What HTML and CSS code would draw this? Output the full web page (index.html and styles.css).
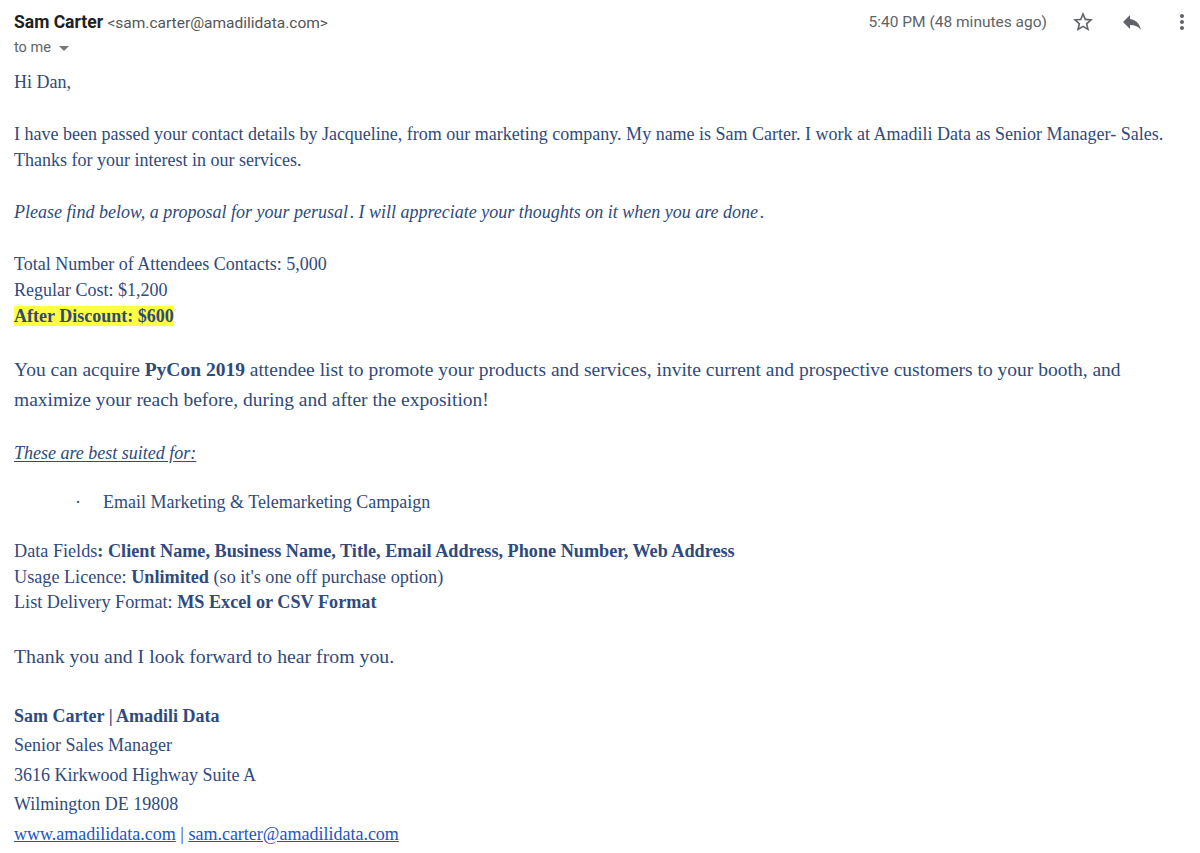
FILE: index.html
```html
<!DOCTYPE html>
<html>
<head>
<meta charset="utf-8">
<link rel="stylesheet" href="styles.css">
</head>
<body>
<div class="mail">
  <header class="head">
    <div class="from">
      <div class="sender"><span class="name">Sam Carter</span> <span class="addr">&lt;sam.carter@amadilidata.com&gt;</span></div>
      <div class="to">to me <svg class="caret" width="10" height="5" viewBox="0 0 10 5"><path d="M0 0h10L5 5z" fill="#777"/></svg></div>
    </div>
    <div class="meta">
      <span class="time">5:40 PM (48 minutes ago)</span>
      <svg class="ico star" width="24" height="24" viewBox="0 0 24 24"><path fill="#5f6368" d="M22 9.24l-7.19-.62L12 2 9.19 8.63 2 9.24l5.46 4.73L5.82 21 12 17.27 18.18 21l-1.63-7.030L22 9.24zM12 15.4l-3.76 2.27 1-4.28-3.32-2.88 4.38-.38L12 6.1l1.71 4.04 4.38.38-3.32 2.88 1 4.28L12 15.4z"/></svg>
      <svg class="ico reply" width="24" height="24" viewBox="0 0 24 24"><path fill="#5f6368" d="M10 9V5l-7 7 7 7v-4.1c5 0 8.5 1.6 11 5.1-1-5-4-10-11-11z"/></svg>
      <svg class="ico more" width="24" height="24" viewBox="0 0 24 24"><path fill="#5f6368" d="M12 8c1.1 0 2-.9 2-2s-.9-2-2-2-2 .9-2 2 .9 2 2 2zm0 2c-1.1 0-2 .9-2 2s.9 2 2 2 2-.9 2-2-.9-2-2-2zm0 6c-1.1 0-2 .9-2 2s.9 2 2 2 2-.9 2-2-.9-2-2-2z"/></svg>
    </div>
  </header>

  <div class="body">
    <p class="p greet">Hi Dan,</p>
    <p class="p">I have been passed your contact details by Jacqueline, from our marketing company. My name is Sam Carter. I work at Amadili Data as Senior Manager- Sales. Thanks for your interest in our services.</p>
    <p class="p ital">Please find below, a proposal for your perusal<span class="sp">.</span>I will appreciate your thoughts on it when you are done<span class="sp">.</span></p>
    <p class="p">Total Number of Attendees Contacts: 5,000<br>Regular Cost: $1,200<br><b class="hl">After Discount: $600</b></p>
    <p class="p big">You can acquire <b>PyCon 2019</b> attendee list to promote your products and services, invite current and prospective customers to your booth, and maximize your reach before, during and after the exposition!</p>
    <p class="p ital under">These are best suited for:</p>
    <div class="bullet"><span class="dot">·</span><span>Email Marketing &amp; Telemarketing Campaign</span></div>
    <p class="p narrow">Data Fields<b>: Client Name, Business Name, Title, Email Address, Phone Number, Web Address</b><br>Usage Licence: <b>Unlimited</b> (so it's one off purchase option)<br>List Delivery Format: <b>MS Excel or CSV Format</b></p>
    <p class="p big thanks">Thank you and I look forward to hear from you.</p>
    <div class="sig">
      <b>Sam Carter | Amadili Data</b>
      <span>Senior Sales Manager</span>
      <span>3616 Kirkwood Highway Suite A</span>
      <span>Wilmington DE 19808</span>
      <span><a href="#">www.amadilidata.com</a> | <a href="#">sam.carter@amadilidata.com</a></span>
    </div>
  </div>
</div>
</body>
</html>
```

FILE: styles.css
```css
html, body { margin: 0; padding: 0; background: #fff; }
.mail { padding: 0 0 0 14px; }
.head { display: flex; justify-content: space-between; align-items: flex-start; font-family: Roboto, "Liberation Sans", sans-serif; }
.from { padding-top: 12px; }
.sender { font-size: 17.5px; line-height: 20px; color: #202124; }
.name { font-weight: 700; }
.addr { font-size: 15.5px; color: #555; }
.to { font-size: 14.5px; color: #5f6368; margin-top: 6px; display: flex; align-items: center; gap: 8px; }
.caret { margin-top: 1px; }
.meta { display: flex; align-items: center; padding-top: 10px; padding-right: 6px; }
.time { font-size: 15.5px; color: #5f6368; margin-right: 24px; }
.ico { display: block; }
.star { margin-right: 25px; }
.reply { margin-right: 26px; }

.body { font-family: "Liberation Serif", "Times New Roman", serif; color: #2f4a7c; font-size: 18px; line-height: 26px; padding-top: 13px; }
.p { margin: 0 0 26px 0; }
.ital { font-style: italic; }
.sp { margin: 0 4px 0 2px; }
.under { text-decoration: underline; text-underline-offset: 2px; margin-bottom: 23px; }
.hl { background: #ffff44; }
.big { font-size: 19.5px; line-height: 30px; margin-bottom: 25px; }
.bullet { display: flex; font-size: 18px; line-height: 26px; padding-left: 61px; margin-bottom: 24px; }
.dot { width: 28px; }
.narrow { font-size: 18.2px; line-height: 25.5px; margin-bottom: 25px; }
.thanks { font-size: 19.8px; margin-bottom: 31px; }
.sig { display: flex; flex-direction: column; line-height: 29.5px; }
.sig a { color: #1a55c8; text-decoration: underline; }
```
